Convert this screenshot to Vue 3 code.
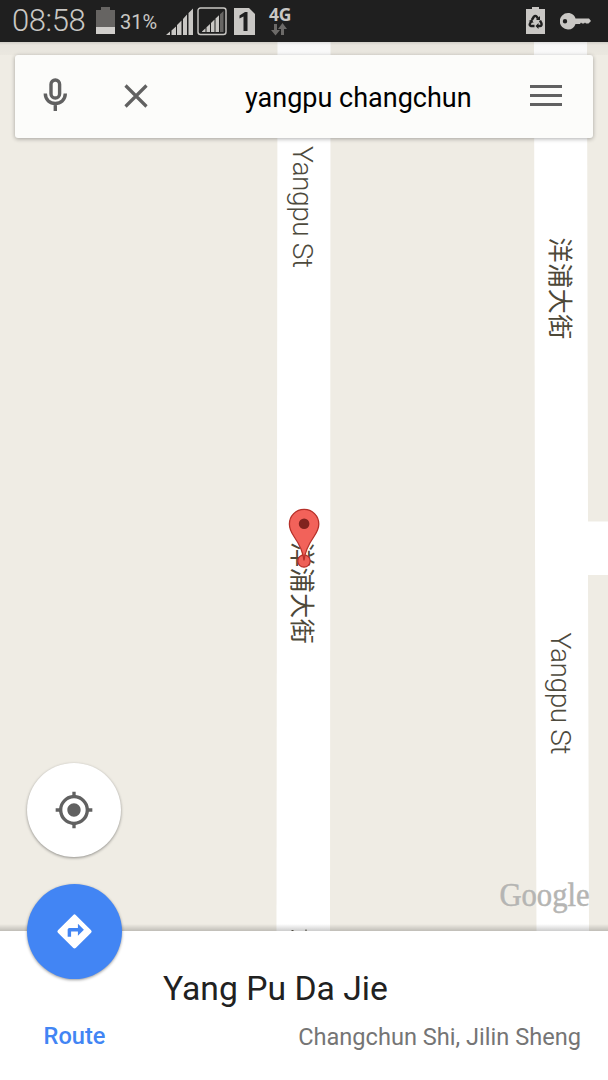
<script setup>
const signalBars = [0, 1, 2, 3, 4]
</script>

<template>
  <div class="screen">
    <header class="status">
      <span class="clock">08:58</span>
      <svg class="battery" width="20" height="28" viewBox="0 0 20 28">
        <path d="M0 3H5V0H14V3H19V27H0Z" fill="#666462" />
        <rect y="20" width="19" height="7" fill="#d0cecb" />
      </svg>
      <span class="percent">31%</span>
      <svg class="signals" width="116" height="30" viewBox="0 0 116 30">
        <g fill="#c9c7c4">
          <path d="M0 28L4 24.5V28ZM5.500 23.500L10 19.500V28H5.500ZM11 18L15.500 13.500V28H11ZM17 12L21 7.500V28H17ZM22.500 6L27 1.500V28H22.500Z" />
          <rect x="32" y="1" width="28" height="26.500" rx="2.500" fill="none" stroke="#c9c7c4" stroke-width="1.400" />
          <path
            v-for="n in signalBars"
            :key="n"
            :d="`M${36 + n * 4.5} ${24.5 - n * 4.3}l3.500 -3.300V25h-3.500Z`"
            :fill="n === 4 ? '#686664' : '#c9c7c4'"
          />
          <path d="M68 1H83L89 7V28H68Z" />
        </g>
        <path d="M73.500 8.500L79 5H81.500V24H77.500V9.500L73.500 11.500Z" fill="#1f1f1f" />
      </svg>
      <div class="network">
        <span>4G</span>
        <svg width="18" height="14" viewBox="0 0 18 14">
          <path d="M3 1H6V7H9L4.500 12.500L0 7H3ZM10 12V6H7L11.500 0L16 6H13V12Z" fill="#6c6a68" />
        </svg>
      </div>
      <svg class="recycle" width="20" height="28" viewBox="0 0 20 28">
        <path d="M0 2H6V0H13V2H19V27H0Z" fill="#c9c7c4" />
        <g fill="none" stroke="#1f1f1f" stroke-width="2.400">
          <path d="M5.800 13L7.800 9.800Q9.300 8 10.800 9.800L12 11.500" />
          <path d="M14 13.500L15.500 16.500Q16 19 14 19H11" />
          <path d="M8.500 19H5Q3 18.500 4 16.500L5.200 14.500" />
        </g>
        <path d="M14 9V13H10ZM12.500 16V22L9.500 19ZM2.500 14L6 12.500L7.500 16Z" fill="#1f1f1f" />
      </svg>
      <svg class="key" width="31" height="17" viewBox="0 0 31 17">
        <path fill-rule="evenodd" d="M8 0C12 0 15 2.500 15.500 5.500H29L31 8L28.500 10.500H26L25 9.500L24 10.500H22L21 9.500L20 11H15.500C14.500 14.500 12 16.500 8 16.500A8.200 8.200 0 0 1 8 0ZM5 6A2.200 2.200 0 1 0 5 10.400A2.200 2.200 0 0 0 5 6Z" fill="#c9c7c4" />
      </svg>
    </header>

    <main class="map">
      <svg class="streets" width="608" height="889" viewBox="0 42 608 889">
        <rect y="42" width="608" height="889" fill="#efece4" />
        <path d="M277.500 42H330.500L330 931H276.500Z" fill="#fff" />
        <path d="M534 42H587L588 521.500H608V575H588L589 931H536.500L535 540Z" fill="#fff" />
        <g class="latin">
          <text transform="translate(293 146) rotate(90)" textLength="122">Yangpu St</text>
          <text transform="translate(551.300 632.500) rotate(90)" textLength="122">Yangpu St</text>
        </g>
        <g class="hanzi">
          <text transform="translate(293.300 542) rotate(90)">洋浦大街</text>
          <text transform="translate(550.600 237.500) rotate(90)">洋浦大街</text>
        </g>
        <path d="M291.500 930.500h2M306 929.500v1.500" stroke="#605d50" stroke-width="1.200" />
        <g stroke="#b63029" stroke-width="1.300">
          <circle cx="304" cy="561" r="6.200" fill="#ee6058" />
          <path d="M304 560.500C303 550 298.500 543 294 536.500C291 532 289.400 528.500 289.400 524A14.700 14.700 0 0 1 318.800 524C318.800 528.500 317 532 314 536.500C309.500 543 305 550 304 560.500Z" fill="#f2625a" />
        </g>
        <circle cx="304.100" cy="523.700" r="5.300" fill="#81231f" />
        <text class="google" x="499.500" y="906" textLength="90" lengthAdjust="spacingAndGlyphs">Google</text>
      </svg>
      <div class="top-shade" />

      <div class="search">
        <svg class="mic" width="26" height="34" viewBox="0 0 26 34" fill="none" stroke="#616161" stroke-width="3.400">
          <rect x="8" y="2" width="8.600" height="18" rx="4.300" />
          <path d="M2.300 15.500C2.300 22 7.100 25.500 12.300 25.500S22.300 22 22.300 15.500M12.300 25.500V33" />
        </svg>
        <svg class="clear" width="24" height="24" viewBox="0 0 24 24">
          <path d="M1.500 1.500L22.500 22.500M22.500 1.500L1.500 22.500" stroke="#616161" stroke-width="3.200" />
        </svg>
        <span class="query">yangpu changchun</span>
        <span class="menu"><i /><i /><i /></span>
      </div>

      <div class="fab locate">
        <svg width="40" height="40" viewBox="0 0 24 24" fill="#616161">
          <path d="M12 8c-2.210 0-4 1.790-4 4s1.790 4 4 4 4-1.790 4-4-1.790-4-4-4zm8.940 3A8.994 8.994 0 0 0 13 3.060V1h-2v2.060A8.994 8.994 0 0 0 3.060 11H1v2h2.060A8.994 8.994 0 0 0 11 20.940V23h2v-2.060A8.994 8.994 0 0 0 20.940 13H23v-2h-2.060zM12 19c-3.870 0-7-3.130-7-7s3.130-7 7-7 7 3.130 7 7-3.130 7-7 7z" />
        </svg>
      </div>
      <div class="edge" />
    </main>

    <section class="sheet">
      <div class="route">
        <div class="fab go">
          <svg width="41" height="41" viewBox="0 0 24 24" fill="#fff">
            <path d="M21.710 11.290l-9-9a.996.996 0 0 0-1.410 0l-9 9a.996.996 0 0 0 0 1.410l9 9c.39.39 1.020.39 1.410 0l9-9a.996.996 0 0 0 0-1.410zM14 14.500V12h-4v3H8v-4c0-.55.45-1 1-1h5V7.500l3.500 3.500-3.500 3.500z" />
          </svg>
        </div>
        <span class="route-label">Route</span>
      </div>
      <div class="place">
        <h1>Yang Pu Da Jie</h1>
        <p>Changchun Shi, Jilin Sheng</p>
      </div>
    </section>
  </div>
</template>

<style>
body {
  margin: 0;
}
</style>

<style scoped>
.screen {
  width: 608px;
  height: 1080px;
  display: flex;
  flex-direction: column;
  overflow: hidden;
  background: #fff;
  font-family: Roboto, "Noto Sans CJK SC", sans-serif;
}
.status {
  height: 42px;
  flex: none;
  display: flex;
  align-items: flex-start;
  box-sizing: border-box;
  padding-left: 12px;
  background: #1f1f1f;
  color: #c9c7c4;
}
.clock {
  width: 84px;
  font-size: 31px;
  font-weight: 300;
  line-height: 42px;
  letter-spacing: -0.4px;
}
.battery {
  margin-top: 7px;
}
.percent {
  width: 46px;
  margin-left: 4px;
  font-size: 20px;
  line-height: 44px;
}
.signals {
  margin-top: 7px;
  flex: none;
}
.network {
  width: 24px;
  margin-left: -14px;
  display: flex;
  flex-direction: column;
  align-items: center;
  font: 700 17.5px/18px "Open Sans", sans-serif;
  letter-spacing: -0.3px;
  padding-top: 5px;
}
.network span {
  line-height: 18px;
}
.recycle {
  margin: 7px 14px 0 auto;
}
.key {
  margin: 13px 17px 0 0;
}
.map {
  position: relative;
  height: 889px;
  flex: none;
  display: flex;
  flex-direction: column;
}
.streets {
  position: absolute;
  inset: 0;
}
.top-shade {
  position: absolute;
  top: 0;
  right: 0;
  left: 0;
  height: 13px;
  background: linear-gradient(rgba(0, 0, 0, 0.13), rgba(0, 0, 0, 0.03) 3px, rgba(0, 0, 0, 0.02));
}
.latin {
  font-size: 28px;
  font-weight: 300;
  fill: #4d4a3d;
}
.hanzi {
  font-family: "Noto Sans CJK SC", sans-serif;
  font-size: 25px;
  letter-spacing: 0.6px;
  fill: #4d4838;
}
.google {
  font-family: "Liberation Serif", serif;
  font-size: 33px;
  fill: #b5b5b3;
  stroke: #b5b5b3;
  stroke-width: 0.5px;
}
.search {
  position: relative;
  box-sizing: border-box;
  width: 578px;
  height: 83px;
  margin: 13px 0 0 15px;
  padding: 0 31px 0 28px;
  display: flex;
  align-items: center;
  border-radius: 3px;
  background: #fcfcfa;
  box-shadow: 0 1px 4px rgba(0, 0, 0, 0.32);
}
.mic {
  margin-top: -3px;
}
.clear {
  margin: 0 0 1px 55px;
}
.query {
  margin: 3px 0 0 97px;
  color: #000;
  font-size: 27px;
  line-height: 32px;
  white-space: nowrap;
}
.menu {
  width: 32px;
  margin: 0 0 2px auto;
  display: flex;
  flex-direction: column;
  gap: 6px;
}
.menu i {
  height: 3px;
  background: #616161;
}
.fab {
  width: 95px;
  height: 95px;
  display: flex;
  align-items: center;
  justify-content: center;
  border-radius: 50%;
  box-shadow: 0 1px 3px rgba(0, 0, 0, 0.4);
}
.locate {
  position: relative;
  width: 94px;
  height: 94px;
  margin: auto 0 74px 27px;
  background: #fff;
}
.edge {
  position: absolute;
  right: 0;
  bottom: 0;
  left: 0;
  height: 7px;
  background: linear-gradient(transparent, rgba(0, 0, 0, 0.2));
}
.sheet {
  position: relative;
  height: 149px;
  display: flex;
  background: #fff;
}
.route {
  width: 149px;
  display: flex;
  flex-direction: column;
  align-items: center;
}
.go {
  margin-top: -47px;
  background: #4285f4;
}
.route-label {
  margin-top: 42px;
  color: #4285f4;
  font-size: 23.6px;
  font-weight: 500;
  line-height: 30px;
}
.place {
  flex: 1;
  padding: 38px 27px 0 14px;
}
h1 {
  margin: 0;
  color: #212121;
  font-size: 33.7px;
  font-weight: 400;
  line-height: 40px;
}
p {
  margin: 13px 0 0;
  color: #757575;
  font-size: 23.6px;
  line-height: 30px;
  text-align: right;
}
</style>
